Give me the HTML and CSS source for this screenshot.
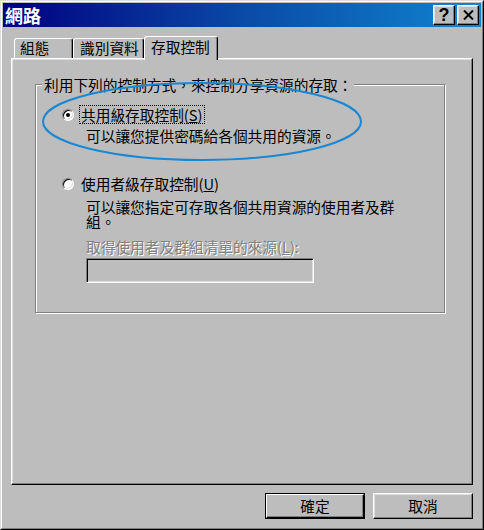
FILE: index.html
```html
<!DOCTYPE html>
<html lang="zh-Hant">
<head>
<meta charset="utf-8">
<title>網路</title>
<link rel="stylesheet" href="styles.css">
</head>
<body>
<div class="window">
  <div class="frame">
    <div class="titlebar">
      <span class="title">網路</span>
      <div class="tb-buttons">
        <div class="tb-btn help">?</div>
        <div class="tb-btn close">
          <svg width="11" height="10" viewBox="0 0 11 10"><path d="M1 0.5 L10 9.5 M10 0.5 L1 9.5" stroke="#000" stroke-width="2" fill="none"/></svg>
        </div>
      </div>
    </div>
    <div class="content">
      <div class="tabs">
        <div class="tab tab1">組態</div>
        <div class="tab tab2">識別資料</div>
        <div class="tab tab3 active">存取控制</div>
      </div>
      <div class="panel">
        <div class="group">
          <span class="legend">利用下列的控制方式，來控制分享資源的存取：</span>
          <svg class="ellipse" width="320" height="79" viewBox="0 0 320 79"><ellipse cx="160" cy="39.5" rx="159" ry="38.5" fill="none" stroke="#1a87d2" stroke-width="2"/></svg>
          <div class="radio-row first">
            <span class="radio checked"></span>
            <span class="label focus">共用級存取控制(<u>S</u>)</span>
          </div>
          <div class="desc d1">可以讓您提供密碼給各個共用的資源。</div>
          <div class="radio-row second">
            <span class="radio"></span>
            <span class="label">使用者級存取控制(<u>U</u>)</span>
          </div>
          <div class="desc d2">可以讓您指定可存取各個共用資源的使用者及群組。</div>
          <div class="disabled-label">取得使用者及群組清單的來源(<u>L</u>):</div>
          <div class="field"></div>
        </div>
      </div>
      <div class="buttons">
        <div class="btn default"><span class="btn-inner">確定</span></div>
        <div class="btn"><span class="btn-inner">取消</span></div>
      </div>
    </div>
  </div>
</div>
</body>
</html>
```
FILE: styles.css
```css
* { box-sizing: border-box; margin: 0; padding: 0; }
html, body { width: 484px; height: 530px; overflow: hidden; background: #bdbdbd; }
body {
  font-family: "Noto Sans CJK TC", "Noto Sans CJK SC", sans-serif;
  font-size: 14.7px;
  color: #000;
}
.window {
  width: 484px;
  height: 530px;
  background: #bdbdbd;
  border: 1px solid;
  border-color: #dfdfdf #000 #000 #dfdfdf;
}
.frame {
  height: 100%;
  border: 1px solid;
  border-color: #fff #808080 #808080 #fff;
  padding: 1px;
  display: flex;
  flex-direction: column;
}
.titlebar {
  height: 24px;
  flex: none;
  background: linear-gradient(to right, #000080 0%, #0a4aa6 50%, #1084d0 100%);
  display: flex;
  align-items: center;
  justify-content: space-between;
  padding: 0 2px 0 2px;
}
.title {
  color: #fff;
  font-weight: bold;
  font-size: 18px;
  line-height: 20px;
}
.tb-buttons { display: flex; gap: 2px; }
.tb-btn {
  width: 22px;
  height: 20px;
  background: #bdbdbd;
  border: 1px solid;
  border-color: #fff #000 #000 #fff;
  box-shadow: inset -1px -1px 0 #808080, inset 1px 1px 0 #dfdfdf;
  display: flex;
  align-items: center;
  justify-content: center;
}
.help {
  font-family: "Liberation Sans", Arial, sans-serif;
  font-weight: bold;
  font-size: 18px;
  line-height: 18px;
}
.content {
  flex: 1;
  display: flex;
  flex-direction: column;
  padding: 9px 8px 0 8px;
}
.tabs {
  display: flex;
  align-items: flex-start;
  height: 24px;
  margin-bottom: -2px;
  padding-left: 3px;
  position: relative;
  z-index: 1;
}
.tab {
  height: 20px;
  margin-top: 2px;
  border: 1px solid;
  border-bottom: none;
  border-color: #fff #000 transparent #fff;
  border-radius: 3px 3px 0 0;
  box-shadow: inset -1px 0 0 #808080;
  line-height: 18px;
  padding-left: 5px;
  white-space: nowrap;
}
.tab1 { width: 59px; }
.tab2 { width: 71px; padding-left: 6px; }
.tab3 { width: 74px; padding-left: 6px; }
.tab.active {
  height: 24px;
  margin-top: 0;
  background: #bdbdbd;
  line-height: 20px;
}
.panel {
  width: 462px;
  height: 427px;
  flex: none;
  border: 1px solid;
  border-color: #fff #000 #000 #fff;
  box-shadow: inset -1px -1px 0 #808080, inset 1px 1px 0 #dfdfdf;
  padding: 25px 0 0 23px;
}
.group {
  position: relative;
  width: 410px;
  height: 229px;
  border: 1px solid #808080;
  box-shadow: inset 1px 1px 0 #fff, 1px 1px 0 #fff;
  padding: 20px 0 0 26px;
}
.legend {
  position: absolute;
  top: -9px;
  left: 6px;
  padding: 0 2px;
  background: #bdbdbd;
  line-height: 17px;
  white-space: nowrap;
}
.ellipse {
  position: absolute;
  left: 6px;
  top: -3px;
  overflow: visible;
  z-index: 2;
}
.radio-row {
  display: flex;
  align-items: center;
  height: 19px;
  gap: 5px;
}
.radio {
  width: 12px;
  height: 12px;
  flex: none;
  border-radius: 50%;
  background: #fff;
  border: 1px solid;
  border-color: #808080 #fff #fff #808080;
  box-shadow: inset 1px 1px 0 #000, inset -1px -1px 0 #dfdfdf;
  display: flex;
  align-items: center;
  justify-content: center;
}
.radio.checked::after {
  content: "";
  width: 4px;
  height: 4px;
  border-radius: 50%;
  background: #000;
}
.label {
  height: 19px;
  line-height: 17px;
  padding: 0 1px;
  border: 1px solid transparent;
  white-space: nowrap;
}
.label.focus { border: 1px dotted #000; }
.desc {
  margin-left: 24px;
  width: 318px;
  line-height: 15px;
}
.d1 { margin-top: 4px; line-height: 16px; }
.radio-row.second { margin-top: 30px; }
.d2 { margin-top: 6px; }
.disabled-label {
  margin-left: 24px;
  margin-top: 10px;
  line-height: 16px;
  color: #808080;
  text-shadow: 1px 1px 0 #fff;
  white-space: nowrap;
}
.field {
  margin-left: 24px;
  margin-top: 3px;
  width: 228px;
  height: 25px;
  border: 1px solid;
  border-color: #808080 #fff #fff #808080;
  box-shadow: inset 1px 1px 0 #000, inset -1px -1px 0 #dfdfdf;
  background: #bdbdbd;
}
.buttons {
  display: flex;
  justify-content: flex-end;
  gap: 8px;
  margin-top: 8px;
}
.btn {
  width: 100px;
  height: 26px;
  border: 1px solid;
  border-color: #fff #000 #000 #fff;
  box-shadow: inset -1px -1px 0 #808080, inset 1px 1px 0 #dfdfdf;
  display: flex;
  align-items: center;
  justify-content: center;
}
.btn.default {
  border: 1px solid #000;
  box-shadow: none;
  padding: 0;
}
.btn-inner {
  line-height: 18px;
}
.btn.default .btn-inner {
  width: 100%;
  height: 100%;
  display: flex;
  align-items: center;
  justify-content: center;
  border: 1px solid;
  border-color: #fff #000 #000 #fff;
  box-shadow: inset -1px -1px 0 #808080;
}
```
